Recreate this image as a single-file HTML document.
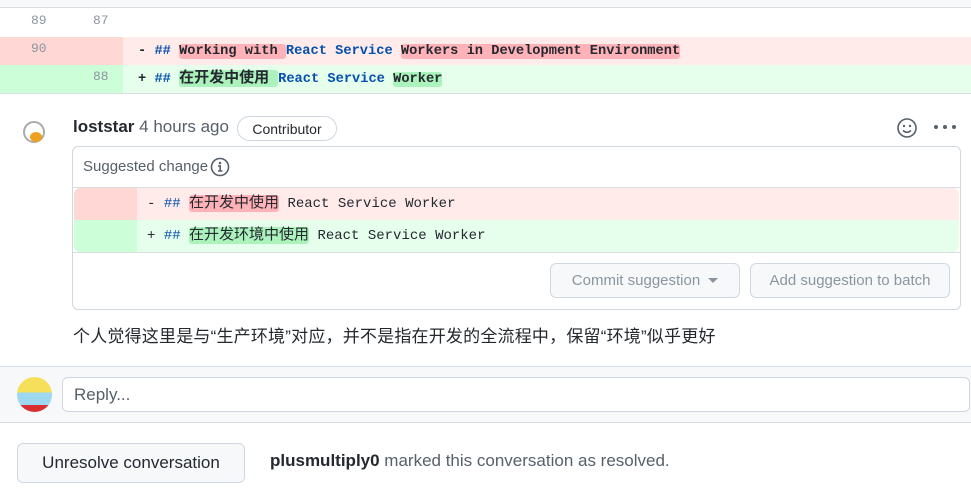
<!DOCTYPE html>
<html><head><meta charset="utf-8"><style>
*{box-sizing:border-box;margin:0;padding:0}
body{width:971px;height:492px;background:#fff;font-family:"Liberation Sans","Noto Sans CJK SC",sans-serif;color:#24292f;position:relative;overflow:hidden;font-size:14px}
.abs{position:absolute}
.mono{font-family:"Liberation Mono","Noto Sans CJK SC",monospace;font-size:13.7px}
.ln{position:absolute;color:#8c959f;font-size:13px;font-family:"Liberation Mono",monospace}
.b{font-weight:bold}
.kw{color:#0550ae}
.hr{background:#ffb3b8;border-radius:3px}
.hg{background:#abf2bc;border-radius:3px}
.cj{font-size:15px;line-height:18px}
.row{height:28px;line-height:28px}
.srow{height:32px;line-height:32px}
.btn{position:absolute;border:1px solid #d0d7de;border-radius:6px;background:#f6f8fa;font-size:14px;font-weight:bold;display:flex;align-items:center;justify-content:center}
</style></head><body>
<div class="abs" style="left:0;top:0;width:971px;height:8px;background:#f6f8fa;border-bottom:1px solid #d8dee4"></div>
<div class="ln" style="left:31px;top:13px">89</div><div class="ln" style="left:93px;top:13px">87</div>
<div class="abs" style="left:0;top:37px;width:123px;height:28px;background:#ffd7d5"></div>
<div class="abs" style="left:123px;top:37px;width:848px;height:28px;background:#ffebe9"></div>
<div class="ln" style="left:31px;top:41px">90</div>
<div class="abs mono b row" style="left:138px;top:38px;white-space:pre">- <span class="kw">##</span> <span class="hr">Working with </span><span class="kw">React Service</span> <span class="hr">Workers in Development Environment</span></div>
<div class="abs" style="left:0;top:65px;width:123px;height:28px;background:#ccffd8"></div>
<div class="abs" style="left:123px;top:65px;width:848px;height:28px;background:#e6ffec"></div>
<div class="ln" style="left:93px;top:69px">88</div>
<div class="abs mono b row" style="left:138px;top:66px;white-space:pre">+ <span class="kw">##</span> <span class="hg cj">在开发中使用 </span><span class="kw">React Service</span> <span class="hg">Worker</span></div>
<div class="abs" style="left:0;top:93px;width:971px;height:1px;background:#d8dee4"></div>
<div class="abs" style="left:23px;top:121px;width:22px;height:22px;border:2px solid #aaa;border-radius:50%"></div>
<div class="abs" style="left:30px;top:132px;width:12px;height:10px;background:#f0a020;border-radius:50%"></div>
<div class="abs" style="left:73px;top:117px;font-size:17px;white-space:nowrap"><b>loststar</b> <span style="color:#57606a">4 hours ago</span></div>
<div class="abs" style="left:237px;top:116px;width:100px;height:25px;border:1px solid #d0d7de;border-radius:13px;font-size:14px;display:flex;align-items:center;justify-content:center">Contributor</div>
<svg class="abs" style="left:896px;top:117px" width="22" height="22" viewBox="0 0 22 22"><circle cx="11" cy="11" r="9" fill="none" stroke="#57606a" stroke-width="1.6"/><circle cx="8" cy="9" r="1.2" fill="#57606a"/><circle cx="14" cy="9" r="1.2" fill="#57606a"/><path d="M7 13.5q4 3.5 8 0" fill="none" stroke="#57606a" stroke-width="1.5"/></svg>
<div class="abs" style="left:934px;top:125px;width:22px;height:4px;display:flex;justify-content:space-between"><i style="width:4px;height:4px;background:#57606a;border-radius:50%"></i><i style="width:4px;height:4px;background:#57606a;border-radius:50%"></i><i style="width:4px;height:4px;background:#57606a;border-radius:50%"></i></div>
<div class="abs" style="left:72px;top:146px;width:889px;height:164px;border:1px solid #d0d7de;border-radius:6px"></div>
<div class="abs" style="left:83px;top:158px;font-size:15px;color:#57606a">Suggested change</div>
<svg class="abs" style="left:210px;top:157px" width="20" height="20" viewBox="0 0 20 20"><circle cx="10" cy="10" r="8.5" fill="none" stroke="#57606a" stroke-width="1.6"/><circle cx="10" cy="6" r="1.3" fill="#57606a"/><path d="M8 9h2.2v5M8 14h4.5" fill="none" stroke="#57606a" stroke-width="1.6"/></svg>
<div class="abs" style="left:73px;top:187px;width:887px;height:1px;background:#d8dee4"></div>
<div class="abs" style="left:74px;top:188px;width:885px;height:64px;border-radius:6px;overflow:hidden">
 <div class="abs" style="left:0;top:0;width:63px;height:32px;background:#ffd7d5"></div>
 <div class="abs" style="left:63px;top:0;width:822px;height:32px;background:#ffebe9"></div>
 <div class="abs" style="left:0;top:32px;width:63px;height:32px;background:#ccffd8"></div>
 <div class="abs" style="left:63px;top:32px;width:822px;height:32px;background:#e6ffec"></div>
</div>
<div class="abs mono srow" style="left:147px;top:188px;white-space:pre;font-size:14px">- <span class="kw">##</span> <span class="hr cj">在开发中使用</span> React Service Worker</div>
<div class="abs mono srow" style="left:147px;top:220px;white-space:pre;font-size:14px">+ <span class="kw">##</span> <span class="hg cj">在开发环境中使用</span> React Service Worker</div>
<div class="abs" style="left:73px;top:252px;width:887px;height:1px;background:#d8dee4"></div>
<div class="btn" style="left:550px;top:263px;width:190px;height:35px;color:#8c959f;font-weight:normal;font-size:15px">Commit suggestion <span style="margin-left:8px;border:5px solid transparent;border-top-color:#8c959f;margin-top:5px"></span></div>
<div class="btn" style="left:750px;top:263px;width:200px;height:35px;color:#8c959f;font-weight:normal;font-size:15px">Add suggestion to batch</div>
<div class="abs" style="left:73px;top:322px;font-size:17px;white-space:nowrap;letter-spacing:0.2px">个人觉得这里是与“生产环境”对应，并不是指在开发的全流程中，保留“环境”似乎更好</div>
<div class="abs" style="left:0;top:366px;width:971px;height:57px;background:#f6f8fa;border-top:1px solid #d8dee4;border-bottom:1px solid #d8dee4"></div>
<div class="abs" style="left:17px;top:377px;width:35px;height:35px;border-radius:50%;background:linear-gradient(#f6e05a 0 45%,#9dd8f0 45% 80%,#d83030 80%)"></div>
<div class="abs" style="left:62px;top:377px;width:908px;height:35px;background:#fff;border:1px solid #d0d7de;border-radius:6px;font-size:17px;color:#57606a;padding:7px 11px">Reply...</div>
<div class="btn" style="left:17px;top:443px;width:228px;height:40px;font-weight:normal;font-size:17px;color:#24292f">Unresolve conversation</div>
<div class="abs" style="left:270px;top:451px;font-size:17px;color:#57606a;white-space:nowrap"><b style="color:#24292f">plusmultiply0</b> marked this conversation as resolved.</div>
</body></html>
